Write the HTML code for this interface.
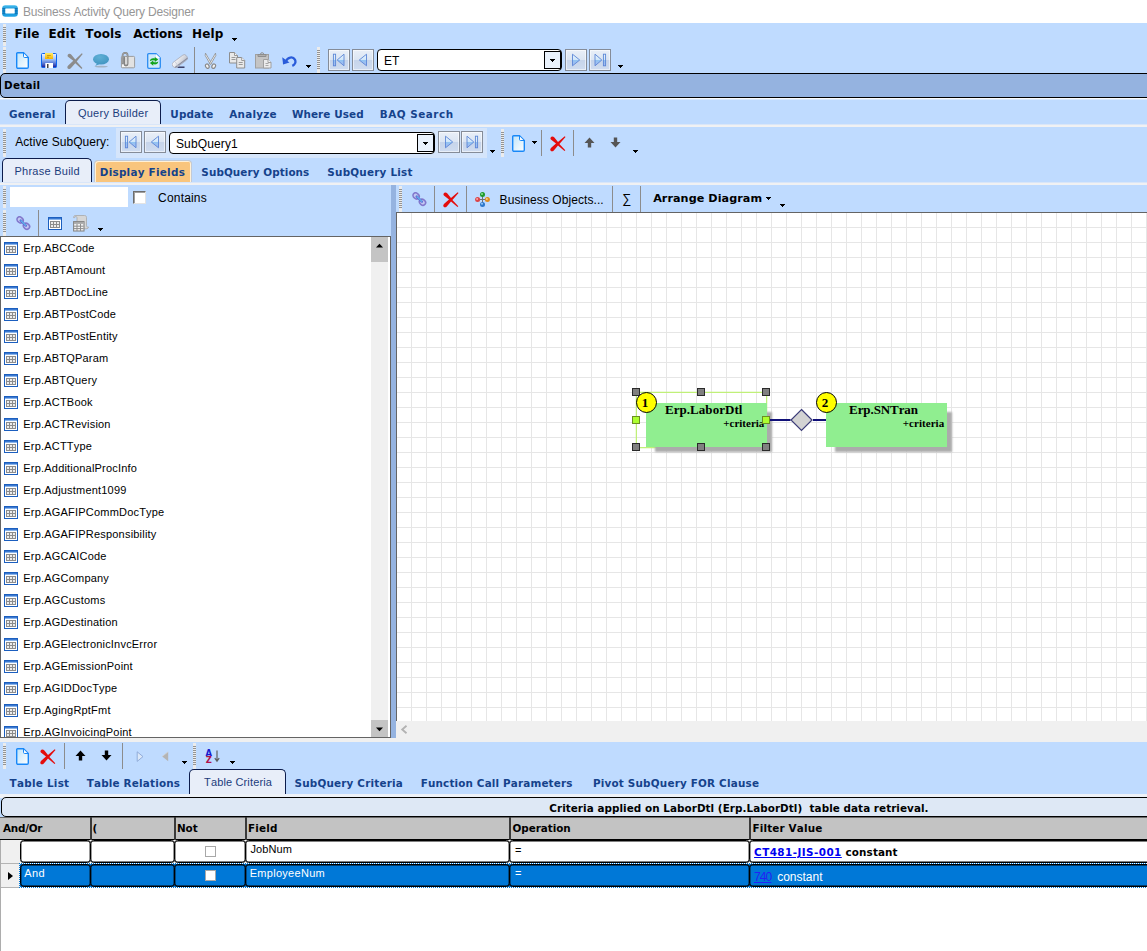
<!DOCTYPE html>
<html><head><meta charset="utf-8"><title>Business Activity Query Designer</title>
<style>
*{box-sizing:border-box;margin:0;padding:0}
html,body{width:1147px;height:951px;overflow:hidden;background:#BFDBFF;font-family:"Liberation Sans",sans-serif;font-size:12px;color:#000}
.a{position:absolute}
.t{position:absolute;white-space:pre;font-kerning:none}
.grip{position:absolute;width:3px;background:repeating-linear-gradient(to bottom,#939393 0,#939393 1px,transparent 1px,transparent 2px) 0 3px/100% calc(100% - 7px) no-repeat,#ECECEC}
.sep{position:absolute;width:1px;background:#8c8c8c}
.dd{position:absolute;width:5px;height:3px;background:#000;clip-path:polygon(0 0,100% 0,100% 33.400%,80% 33.400%,80% 66.700%,60% 66.700%,60% 100%,40% 100%,40% 66.700%,20% 66.700%,20% 33.400%,0 33.400%)}
.nb{position:absolute;width:22px;height:22px;border:1px solid #858c98;background:linear-gradient(#e9eff8 0,#dbe5f3 50%,#c6d4ea 50%,#cfdcf0 100%);box-shadow:inset 0 0 0 1px rgba(255,255,255,.55)}

</style></head>
<body>
<svg width="0" height="0" style="position:absolute"><defs>
<linearGradient id="gdoc" x1="0" y1="0" x2="1" y2="1"><stop offset="0" stop-color="#bfe4fa"/><stop offset="1" stop-color="#ffffff"/></linearGradient>
<linearGradient id="gsave" x1="0" y1="0" x2="0" y2="1"><stop offset="0" stop-color="#f2f2ff"/><stop offset=".4" stop-color="#a4c4f6"/><stop offset=".65" stop-color="#6486dc"/><stop offset="1" stop-color="#181896"/></linearGradient><linearGradient id="gyel" x1="0" y1="0" x2="0" y2="1"><stop offset="0" stop-color="#ffe964"/><stop offset="1" stop-color="#f6b400"/></linearGradient>
<linearGradient id="gnav" x1="0" y1="0" x2="0" y2="1"><stop offset="0" stop-color="#e8f3fc"/><stop offset=".5" stop-color="#cfe6fa"/><stop offset=".5" stop-color="#8fc4f2"/><stop offset="1" stop-color="#a9b8f0"/></linearGradient>
<linearGradient id="ger" x1="0" y1="0" x2="1" y2="1"><stop offset="0" stop-color="#ffffff"/><stop offset="1" stop-color="#b8bcc8"/></linearGradient>
<radialGradient id="gbub" cx=".4" cy=".3" r=".8"><stop offset="0" stop-color="#5fb0d6"/><stop offset="1" stop-color="#3f93c0"/></radialGradient>
</defs></svg>
<div class="a" style="left:0px;top:0px;width:1147px;height:23px;background:#fff"></div>
<svg class="a" style="left:2px;top:5px" width="16" height="12" viewBox="0 0 16 12" ><defs><linearGradient id="gti" x1="0" y1="0" x2="0" y2="1"><stop offset="0" stop-color="#45bdf0"/><stop offset=".45" stop-color="#128bd0"/><stop offset="1" stop-color="#22a6e6"/></linearGradient></defs><rect x=".2" y=".2" width="15.600" height="11.600" rx="3.200" fill="url(#gti)"/><rect x="3.200" y="3.400" width="9.600" height="5" rx=".6" fill="#fff"/><path d="M.4 3.500h2.800M.4 5.200h2.800M.4 6.900h2.800M.4 8.600h2.800M12.800 3.500h2.800M12.800 5.200h2.800M12.800 6.900h2.800M12.800 8.600h2.800" stroke="#0a64a6" stroke-width=".7"/></svg>
<div class="t " style="left:23.02px;top:5px;font-family:'Liberation Sans',sans-serif;font-weight:normal;font-size:12px;line-height:14px;letter-spacing:-0.184px;color:#969696;">Business Activity Query Designer</div>
<div class="grip" style="left:3px;top:24px;height:22px"></div>
<div class="t " style="left:14.50px;top:27px;font-family:'DejaVu Sans','Liberation Sans',sans-serif;font-weight:bold;font-size:12px;line-height:14px;letter-spacing:0.140px;">File</div>
<div class="t " style="left:48.60px;top:27px;font-family:'DejaVu Sans','Liberation Sans',sans-serif;font-weight:bold;font-size:12px;line-height:14px;letter-spacing:0.080px;">Edit</div>
<div class="t " style="left:85.34px;top:27px;font-family:'DejaVu Sans','Liberation Sans',sans-serif;font-weight:bold;font-size:12px;line-height:14px;letter-spacing:0.024px;">Tools</div>
<div class="t " style="left:133.34px;top:27px;font-family:'DejaVu Sans','Liberation Sans',sans-serif;font-weight:bold;font-size:12px;line-height:14px;letter-spacing:-0.125px;">Actions</div>
<div class="t " style="left:192.10px;top:27px;font-family:'DejaVu Sans','Liberation Sans',sans-serif;font-weight:bold;font-size:12px;line-height:14px;letter-spacing:0.085px;">Help</div>
<div class="dd" style="left:232px;top:38px"></div>
<div class="grip" style="left:3px;top:47px;height:26px"></div>
<svg class="a" style="left:16px;top:52px" width="13" height="17" viewBox="0 0 13 17" ><path d="M1.600 .7h5.900l4.800 4.800V15a1.300 1.300 0 0 1-1.300 1.300H2A1.300 1.300 0 0 1 .7 15V1.600a.9.900 0 0 1 .9-.9z" fill="url(#gdoc)" stroke="#1888f8" stroke-width="1.400"/><path d="M7.500 .7v3.700a1.100 1.100 0 0 0 1.100 1.100h3.700z" fill="#fff" stroke="#1888f8" stroke-width="1"/></svg><svg class="a" style="left:41px;top:53px" width="16" height="15" viewBox="0 0 16 15" ><rect x=".5" y=".5" width="15" height="14" rx=".9" fill="url(#gsave)" stroke="#0c66f0" stroke-width="1"/><rect x="4" y="0" width="8" height="6" fill="url(#gyel)"/><path d="M6 2.500h3.800M6 4.200h2" stroke="#b88600" stroke-width=".7"/><rect x="4.300" y="10" width="7.700" height="5" fill="#fff"/><rect x="6" y="11" width="1.500" height="4" fill="#444"/></svg><svg class="a" style="left:67px;top:52.5px" width="16" height="16" viewBox="0 0 16 16" ><path d="M.8 1.800C1.500 .3 3.300 .4 4.400 1.700L8.300 6.600 14.800 .3l.9.700-6 7.400 5.700 6.700-.8.800-6.300-5.700-4.300 4.900C2.900 16.300 1.300 16.300.6 15.200c-.5-.9-.2-1.900.6-2.700L6.300 7.800 1.300 4C.5 3.300.4 2.600.8 1.800z" fill="#8c8c8c"/></svg><svg class="a" style="left:93px;top:54px" width="17" height="14" viewBox="0 0 17 14" ><ellipse cx="8.200" cy="12.600" rx="6.800" ry=".8" fill="#a3b3c4"/><ellipse cx="8" cy="5.200" rx="8" ry="5.200" fill="url(#gbub)"/><path d="M4.200 9L2.200 12l5-2.300z" fill="#489cc6"/></svg><svg class="a" style="left:120px;top:52px" width="16" height="17" viewBox="0 0 16 17" ><rect x="1.400" y="4.400" width="13.200" height="11.400" rx="1" fill="#e2e2e2" stroke="#9c9c9c" stroke-width="1"/><rect x="2" y="5" width="5.500" height="10" fill="#f4f4f4"/><path d="M2.600 11.500V3.300a2.500 2.500 0 0 1 5 0V12a1.600 1.600 0 0 1-3.200 0V5.500" fill="none" stroke="#848484" stroke-width="1.700" stroke-linecap="round"/><path d="M2.600 11.500V3.300a2.500 2.500 0 0 1 5 0V12" fill="none" stroke="#b8b8b8" stroke-width=".5"/></svg><svg class="a" style="left:147px;top:53px" width="14" height="16" viewBox="0 0 14 16" ><path d="M1.700 .7h7.300l4.300 4.300V14a1.300 1.300 0 0 1-1.300 1.300H2A1.300 1.300 0 0 1 .7 14V1.700a1 1 0 0 1 1-1z" fill="#cfe9fa" stroke="#2a8cf2" stroke-width="1.300"/><path d="M9 .9v3.200a1 1 0 0 0 1 1h3.200z" fill="#fff"/><path d="M2.800 8.200C3 5.600 5.600 4.600 7.800 5.500V3.900l3.400 2.700-3.400 2.500V7.600C6 7 4.300 7.400 2.800 8.200z" fill="#12a41c"/><path d="M11.300 8.400c-.2 2.600-2.800 3.600-5 2.700v1.600L2.900 10l3.400-2.500v1.500c1.800.6 3.500.2 5-.6z" fill="#12a41c"/></svg><svg class="a" style="left:172px;top:54px" width="16" height="14" viewBox="0 0 16 14" ><path d="M5.500 13.200h7" stroke="#26264e" stroke-width="1.300"/><g transform="rotate(-37 8 7)"><rect x="-.8" y="4" width="17" height="6.200" rx="2.400" fill="url(#ger)" stroke="#a4a8b6" stroke-width=".7"/><path d="M.2 9.200h15.500" stroke="#8a8ea0" stroke-width="1.100"/><path d="M3.600 4.200v5.800" stroke="#c8ccd6" stroke-width=".8"/></g></svg>
<div class="sep" style="left:194px;top:47px;height:26px"></div>
<svg class="a" style="left:204px;top:52.5px" width="13" height="16" viewBox="0 0 13 16" ><path d="M1.500 .2L7.600 10.600 6.200 11.200 1.200 2.500z" fill="#f6f6f6" stroke="#8a8a8a" stroke-width=".8"/><path d="M11.500 .2L5.400 10.600 6.800 11.200 11.800 2.500z" fill="#f6f6f6" stroke="#8a8a8a" stroke-width=".8"/><ellipse cx="3.300" cy="13.200" rx="1.700" ry="2.300" fill="#f2f2f2" stroke="#8a8a8a" stroke-width="1.200" transform="rotate(-28 3.300 13.200)"/><ellipse cx="9.700" cy="13.200" rx="1.700" ry="2.300" fill="#f2f2f2" stroke="#8a8a8a" stroke-width="1.200" transform="rotate(28 9.700 13.200)"/></svg><svg class="a" style="left:229px;top:52px" width="17" height="17" viewBox="0 0 17 17" ><path d="M.5 .5h5l3 3v7.500h-8z" fill="#e9e9e9" stroke="#8e8e8e"/><path d="M5.500 .5v3h3" fill="#f8f8f8" stroke="#8e8e8e" stroke-width=".9"/><path d="M2.500 5.500h4M2.500 7.500h4" stroke="#9a9a9a"/><g transform="translate(7.200 5)"><path d="M.5 .5h5l3 3v7.500h-8z" fill="#e9e9e9" stroke="#8e8e8e"/><path d="M5.500 .5v3h3" fill="#f8f8f8" stroke="#8e8e8e" stroke-width=".9"/><path d="M2.500 5.500h4M2.500 7.500h4" stroke="#9a9a9a"/></g></svg><svg class="a" style="left:255px;top:52px" width="17" height="17" viewBox="0 0 17 17" ><rect x=".5" y="2.500" width="13" height="13.500" fill="#c4c4c4" stroke="#a0a0a0"/><path d="M3 2.500h8v2H3z" fill="#b0b0b0" stroke="#8e8e8e"/><path d="M5.500 2.300a1.600 1.600 0 0 1 3.200 0" fill="none" stroke="#8e8e8e"/><path d="M8.500 7.500h4.500l3 3v5.500h-7.500z" fill="#ececec" stroke="#a0a0a0"/><path d="M13 7.500v3h3" fill="#f6f6f6" stroke="#a0a0a0"/><path d="M10.500 11.500h3M10.500 13.500h3" stroke="#a8a8a8"/></svg><svg class="a" style="left:282px;top:55px" width="15" height="12" viewBox="0 0 15 12" ><path d="M4 6.200C5.500 2 11 1.200 12.900 4.600c1.300 2.400.2 5-2.600 6.300" fill="none" stroke="#2a5cda" stroke-width="2.300"/><path d="M.2 2.200l.9 7.300 6.400-2z" fill="#2a5cda"/></svg>
<div class="dd" style="left:306px;top:65px"></div>
<div class="grip" style="left:317px;top:47px;height:26px"></div>
<div class="nb" style="left:328px;top:49px"><svg class="a" style="left:-1px;top:-1px" width="22" height="22" viewBox="0 0 22 22"><rect x="5.400" y="5.200" width="2.200" height="11.600" fill="url(#gnav)" stroke="#5b86d6" stroke-width=".9"/><path d="M9.200 11L16 5.200v11.600z" fill="url(#gnav)" stroke="#5b86d6" stroke-width=".9"/></svg></div><div class="nb" style="left:352px;top:49px"><svg class="a" style="left:-1px;top:-1px" width="22" height="22" viewBox="0 0 22 22"><path d="M7.300 11L14.500 5.200v11.600z" fill="url(#gnav)" stroke="#5b86d6" stroke-width=".9"/></svg></div>
<div class="a" style="left:377px;top:49px;width:185px;height:22px;background:#fff;border:1px solid #000;border-radius:4px"></div><div class="a" style="left:544px;top:51px;width:17px;height:18px;background:#EAF2FC;border:1px solid #000"></div><div class="dd" style="left:550px;top:59px"></div>
<div class="t " style="left:384.02px;top:54px;font-family:'Liberation Sans',sans-serif;font-weight:normal;font-size:12px;line-height:14px;">ET</div>
<div class="nb" style="left:565px;top:49px"><svg class="a" style="left:-1px;top:-1px" width="22" height="22" viewBox="0 0 22 22"><path d="M14.700 11L7.500 5.200v11.600z" fill="url(#gnav)" stroke="#5b86d6" stroke-width=".9"/></svg></div><div class="nb" style="left:589px;top:49px"><svg class="a" style="left:-1px;top:-1px" width="22" height="22" viewBox="0 0 22 22"><rect x="14.400" y="5.200" width="2.200" height="11.600" fill="url(#gnav)" stroke="#5b86d6" stroke-width=".9"/><path d="M12.800 11L6 5.200v11.600z" fill="url(#gnav)" stroke="#5b86d6" stroke-width=".9"/></svg></div>
<div class="dd" style="left:618px;top:65px"></div>
<div class="a" style="left:0px;top:73px;width:1152px;height:25px;background:#95B3E0;border:1px solid #000;border-radius:5px"></div>
<div class="t " style="left:4.05px;top:79px;font-family:'DejaVu Sans','Liberation Sans',sans-serif;font-weight:bold;font-size:10.4px;line-height:12px;letter-spacing:0.245px;">Detail</div>
<div class="a" style="left:0px;top:98px;width:1147px;height:1px;background:#fbfbfb"></div>
<div class="a" style="left:0px;top:99px;width:1147px;height:1px;background:#d8e8fd"></div>
<div class="a" style="left:65px;top:100px;width:96px;height:24px;background:#E8EEF9;border:1px solid #0c1c4c;border-bottom:none;border-radius:5px 5px 0 0"></div>
<div class="t " style="left:9.08px;top:108px;font-family:'DejaVu Sans','Liberation Sans',sans-serif;font-weight:bold;font-size:10.4px;line-height:12px;letter-spacing:0.072px;color:#15428B;">General</div>
<div class="t " style="left:170.35px;top:108px;font-family:'DejaVu Sans','Liberation Sans',sans-serif;font-weight:bold;font-size:10.4px;line-height:12px;letter-spacing:0.116px;color:#15428B;">Update</div>
<div class="t " style="left:229.35px;top:108px;font-family:'DejaVu Sans','Liberation Sans',sans-serif;font-weight:bold;font-size:10.4px;line-height:12px;letter-spacing:0.205px;color:#15428B;">Analyze</div>
<div class="t " style="left:291.89px;top:108px;font-family:'DejaVu Sans','Liberation Sans',sans-serif;font-weight:bold;font-size:10.4px;line-height:12px;letter-spacing:0.102px;color:#15428B;">Where Used</div>
<div class="t " style="left:379.85px;top:108px;font-family:'DejaVu Sans','Liberation Sans',sans-serif;font-weight:bold;font-size:10.4px;line-height:12px;letter-spacing:0.508px;color:#15428B;">BAQ Search</div>
<div class="t " style="left:77.98px;top:107px;font-family:'Liberation Sans',sans-serif;font-weight:normal;font-size:11px;line-height:12px;letter-spacing:0.238px;color:#1c3c7c;">Query Builder</div>
<div class="a" style="left:0px;top:124px;width:1147px;height:1px;background:#D9E6F9"></div>
<div class="a" style="left:0px;top:125px;width:1147px;height:2px;background:#F0F1F3"></div>
<div class="grip" style="left:3px;top:129px;height:28px"></div>
<div class="t " style="left:15.28px;top:135px;font-family:'Liberation Sans',sans-serif;font-weight:normal;font-size:12px;line-height:14px;letter-spacing:0.050px;">Active SubQuery:</div>
<div class="a" style="left:116px;top:128px;width:371px;height:30px;background:#D5E5FB"></div>
<div class="nb" style="left:120px;top:131px"><svg class="a" style="left:-1px;top:-1px" width="22" height="22" viewBox="0 0 22 22"><rect x="5.400" y="5.200" width="2.200" height="11.600" fill="url(#gnav)" stroke="#5b86d6" stroke-width=".9"/><path d="M9.200 11L16 5.200v11.600z" fill="url(#gnav)" stroke="#5b86d6" stroke-width=".9"/></svg></div><div class="nb" style="left:144px;top:131px"><svg class="a" style="left:-1px;top:-1px" width="22" height="22" viewBox="0 0 22 22"><path d="M7.300 11L14.500 5.200v11.600z" fill="url(#gnav)" stroke="#5b86d6" stroke-width=".9"/></svg></div>
<div class="a" style="left:169px;top:132px;width:266px;height:22px;background:#fff;border:1px solid #000;border-radius:4px"></div><div class="a" style="left:417px;top:134px;width:17px;height:18px;background:#EAF2FC;border:1px solid #000"></div><div class="dd" style="left:423px;top:142px"></div>
<div class="t " style="left:175.96px;top:137px;font-family:'Liberation Sans',sans-serif;font-weight:normal;font-size:12px;line-height:14px;letter-spacing:0.128px;">SubQuery1</div>
<div class="nb" style="left:438px;top:131px"><svg class="a" style="left:-1px;top:-1px" width="22" height="22" viewBox="0 0 22 22"><path d="M14.700 11L7.500 5.200v11.600z" fill="url(#gnav)" stroke="#5b86d6" stroke-width=".9"/></svg></div><div class="nb" style="left:461px;top:131px"><svg class="a" style="left:-1px;top:-1px" width="22" height="22" viewBox="0 0 22 22"><rect x="14.400" y="5.200" width="2.200" height="11.600" fill="url(#gnav)" stroke="#5b86d6" stroke-width=".9"/><path d="M12.800 11L6 5.200v11.600z" fill="url(#gnav)" stroke="#5b86d6" stroke-width=".9"/></svg></div>
<div class="dd" style="left:490px;top:150px"></div>
<div class="grip" style="left:501px;top:129px;height:28px"></div>
<svg class="a" style="left:512px;top:135px" width="13" height="17" viewBox="0 0 13 17" ><path d="M1.600 .7h5.900l4.800 4.800V15a1.300 1.300 0 0 1-1.300 1.300H2A1.300 1.300 0 0 1 .7 15V1.600a.9.900 0 0 1 .9-.9z" fill="url(#gdoc)" stroke="#1888f8" stroke-width="1.400"/><path d="M7.500 .7v3.700a1.100 1.100 0 0 0 1.100 1.100h3.700z" fill="#fff" stroke="#1888f8" stroke-width="1"/></svg><div class="dd" style="left:532px;top:141px"></div><div class="sep" style="left:541px;top:130px;height:26px"></div><svg class="a" style="left:550px;top:136px" width="16" height="16" viewBox="0 0 16 16" ><path d="M.7 1.500C1.500 .1 3.300 .3 4.400 1.600L8 6 14.700 .2l.8.700-6.100 7 5.900 6.300-.8.800-6.500-5.400-4.200 4.800C2.800 15.700 1.100 15.600.5 14.500c-.5-.9-.1-1.900.7-2.700L6 7.500 1.200 3.800C.4 3.100.3 2.300.7 1.500z" fill="#e40c0c"/></svg><div class="sep" style="left:573px;top:130px;height:26px"></div><svg class="a" style="left:584px;top:137px" width="11" height="11" viewBox="0 0 11 11" ><path d="M5.500 .5l5 5.500H7.200V10.500H3.800V6H.5z" fill="#555"/></svg><svg class="a" style="left:610px;top:137px" width="11" height="11" viewBox="0 0 11 11" ><path d="M5.500 10.500l5-5.500H7.200V.5H3.800V5H.5z" fill="#555"/></svg><div class="dd" style="left:633px;top:150px"></div>
<div class="a" style="left:2px;top:158px;width:90px;height:24px;background:#E8EEF9;border:1px solid #0c1c4c;border-bottom:none;border-radius:5px 5px 0 0"></div>
<div class="t " style="left:14.40px;top:165px;font-family:'Liberation Sans',sans-serif;font-weight:normal;font-size:11px;line-height:12px;letter-spacing:0.267px;color:#1c3c7c;">Phrase Build</div>
<div class="a" style="left:94px;top:160px;width:98px;height:22px;background:#F9C57D;border:1px solid #c2cad6;border-bottom:none;border-radius:4px 4px 0 0;box-shadow:inset 1px 1px 0 #fff1d8,inset -1px 0 0 #fff1d8"></div>
<div class="t " style="left:99.75px;top:166px;font-family:'DejaVu Sans','Liberation Sans',sans-serif;font-weight:bold;font-size:10.4px;line-height:12px;letter-spacing:0.262px;color:#15428B;">Display Fields</div>
<div class="t " style="left:201.35px;top:166px;font-family:'DejaVu Sans','Liberation Sans',sans-serif;font-weight:bold;font-size:10.4px;line-height:12px;letter-spacing:0.087px;color:#15428B;">SubQuery Options</div>
<div class="t " style="left:327.35px;top:166px;font-family:'DejaVu Sans','Liberation Sans',sans-serif;font-weight:bold;font-size:10.4px;line-height:12px;letter-spacing:0.214px;color:#15428B;">SubQuery List</div>
<div class="a" style="left:0px;top:182px;width:1147px;height:1px;background:#D9E6F9"></div>
<div class="a" style="left:0px;top:183px;width:1147px;height:2px;background:#F0F1F3"></div>
<div class="grip" style="left:3px;top:186px;height:22px"></div>
<div class="a" style="left:10px;top:187px;width:118px;height:20px;background:#fff"></div>
<div class="a" style="left:133px;top:191px;width:13px;height:13px;background:#fff;border:1px solid;border-color:#6d6d6d #e3e3e3 #e3e3e3 #6d6d6d;box-shadow:inset 1px 1px 0 #a0a0a0"></div>
<div class="t " style="left:158.09px;top:191px;font-family:'Liberation Sans',sans-serif;font-weight:normal;font-size:12px;line-height:14px;letter-spacing:0.183px;">Contains</div>
<div class="grip" style="left:3px;top:210px;height:26px"></div>
<svg class="a" style="left:16px;top:216px" width="15" height="15" viewBox="0 0 15 15" ><g fill="none"><ellipse cx="4.100" cy="3.900" rx="3.300" ry="2.700" transform="rotate(40 4.100 3.900)" fill="#c4c0ec" fill-opacity=".7" stroke="#8278cc" stroke-width="1.600"/><ellipse cx="10.500" cy="10.200" rx="3.300" ry="2.700" transform="rotate(40 10.500 10.200)" fill="#c4c0ec" fill-opacity=".7" stroke="#8278cc" stroke-width="1.600"/><path d="M4.600 4.400l5.400 5.300" stroke="#5a6cd8" stroke-width="2.200" stroke-linecap="round"/><path d="M5 4.600l4.800 4.700" stroke="#62e0f4" stroke-width="1" stroke-linecap="round"/></g></svg><div class="sep" style="left:38px;top:210px;height:26px"></div>
<svg class="a" style="left:48px;top:217px" width="14" height="13" viewBox="0 0 14 13" ><rect x=".5" y=".5" width="13" height="12" fill="#fff" stroke="#1c5fbf"/><rect x="1" y="1" width="12" height="1" fill="#3a78d0"/><rect x="1" y="2" width="12" height="1" fill="#8ab4ea"/><rect x="2.500" y="4.500" width="9" height="6" fill="#ececec" stroke="#8c8c8c"/><path d="M5.500 4.500v6M8.500 4.500v6M2.500 7.500h9" stroke="#8c8c8c" fill="none"/></svg>
<svg class="a" style="left:73px;top:215px" width="17" height="17" viewBox="0 0 17 17" ><path d="M2.200 .5h9.300c1.400 0 2 .8 2 2v8.300c0 1 .8 1.400 2 1.200 0 1.300-1 1.800-2.500 1.800H4V3c0-1-.4-1.500-1.200-1.500s-1.200.5-1.200 1.200H.6C.5 1.500 1.100.5 2.200.5z" fill="#d6d6d6" stroke="#a8a8a8" stroke-width=".8"/><rect x=".6" y="6.600" width="10.400" height="9.400" fill="#f2f2f2" stroke="#868686" stroke-width="1.100"/><rect x="1" y="7" width="9.600" height="1.900" fill="#a8a8a8"/><path d="M4 9v7M7.500 9v7M1 11.200h9.600M1 13.600h9.600" stroke="#8e8e8e" stroke-width="1"/></svg><div class="dd" style="left:98px;top:228px"></div>
<div class="a" style="left:0px;top:236px;width:391px;height:502px;background:#fff;border:1px solid #646464"></div>
<svg class="a" style="left:4px;top:242px" width="14" height="13" viewBox="0 0 14 13" ><rect x=".5" y=".5" width="13" height="12" fill="#fff" stroke="#1c5fbf"/><rect x="1" y="1" width="12" height="1" fill="#3a78d0"/><rect x="1" y="2" width="12" height="1" fill="#8ab4ea"/><rect x="2.500" y="4.500" width="9" height="6" fill="#ececec" stroke="#8c8c8c"/><path d="M5.500 4.500v6M8.500 4.500v6M2.500 7.500h9" stroke="#8c8c8c" fill="none"/></svg>
<div class="t " style="left:23.30px;top:242px;font-family:'Liberation Sans',sans-serif;font-weight:normal;font-size:11px;line-height:12px;letter-spacing:0.200px;">Erp.ABCCode</div>
<svg class="a" style="left:4px;top:264px" width="14" height="13" viewBox="0 0 14 13" ><rect x=".5" y=".5" width="13" height="12" fill="#fff" stroke="#1c5fbf"/><rect x="1" y="1" width="12" height="1" fill="#3a78d0"/><rect x="1" y="2" width="12" height="1" fill="#8ab4ea"/><rect x="2.500" y="4.500" width="9" height="6" fill="#ececec" stroke="#8c8c8c"/><path d="M5.500 4.500v6M8.500 4.500v6M2.500 7.500h9" stroke="#8c8c8c" fill="none"/></svg>
<div class="t " style="left:23.30px;top:264px;font-family:'Liberation Sans',sans-serif;font-weight:normal;font-size:11px;line-height:12px;letter-spacing:0.200px;">Erp.ABTAmount</div>
<svg class="a" style="left:4px;top:286px" width="14" height="13" viewBox="0 0 14 13" ><rect x=".5" y=".5" width="13" height="12" fill="#fff" stroke="#1c5fbf"/><rect x="1" y="1" width="12" height="1" fill="#3a78d0"/><rect x="1" y="2" width="12" height="1" fill="#8ab4ea"/><rect x="2.500" y="4.500" width="9" height="6" fill="#ececec" stroke="#8c8c8c"/><path d="M5.500 4.500v6M8.500 4.500v6M2.500 7.500h9" stroke="#8c8c8c" fill="none"/></svg>
<div class="t " style="left:23.30px;top:286px;font-family:'Liberation Sans',sans-serif;font-weight:normal;font-size:11px;line-height:12px;letter-spacing:0.200px;">Erp.ABTDocLine</div>
<svg class="a" style="left:4px;top:308px" width="14" height="13" viewBox="0 0 14 13" ><rect x=".5" y=".5" width="13" height="12" fill="#fff" stroke="#1c5fbf"/><rect x="1" y="1" width="12" height="1" fill="#3a78d0"/><rect x="1" y="2" width="12" height="1" fill="#8ab4ea"/><rect x="2.500" y="4.500" width="9" height="6" fill="#ececec" stroke="#8c8c8c"/><path d="M5.500 4.500v6M8.500 4.500v6M2.500 7.500h9" stroke="#8c8c8c" fill="none"/></svg>
<div class="t " style="left:23.30px;top:308px;font-family:'Liberation Sans',sans-serif;font-weight:normal;font-size:11px;line-height:12px;letter-spacing:0.200px;">Erp.ABTPostCode</div>
<svg class="a" style="left:4px;top:330px" width="14" height="13" viewBox="0 0 14 13" ><rect x=".5" y=".5" width="13" height="12" fill="#fff" stroke="#1c5fbf"/><rect x="1" y="1" width="12" height="1" fill="#3a78d0"/><rect x="1" y="2" width="12" height="1" fill="#8ab4ea"/><rect x="2.500" y="4.500" width="9" height="6" fill="#ececec" stroke="#8c8c8c"/><path d="M5.500 4.500v6M8.500 4.500v6M2.500 7.500h9" stroke="#8c8c8c" fill="none"/></svg>
<div class="t " style="left:23.30px;top:330px;font-family:'Liberation Sans',sans-serif;font-weight:normal;font-size:11px;line-height:12px;letter-spacing:0.200px;">Erp.ABTPostEntity</div>
<svg class="a" style="left:4px;top:352px" width="14" height="13" viewBox="0 0 14 13" ><rect x=".5" y=".5" width="13" height="12" fill="#fff" stroke="#1c5fbf"/><rect x="1" y="1" width="12" height="1" fill="#3a78d0"/><rect x="1" y="2" width="12" height="1" fill="#8ab4ea"/><rect x="2.500" y="4.500" width="9" height="6" fill="#ececec" stroke="#8c8c8c"/><path d="M5.500 4.500v6M8.500 4.500v6M2.500 7.500h9" stroke="#8c8c8c" fill="none"/></svg>
<div class="t " style="left:23.30px;top:352px;font-family:'Liberation Sans',sans-serif;font-weight:normal;font-size:11px;line-height:12px;letter-spacing:0.200px;">Erp.ABTQParam</div>
<svg class="a" style="left:4px;top:374px" width="14" height="13" viewBox="0 0 14 13" ><rect x=".5" y=".5" width="13" height="12" fill="#fff" stroke="#1c5fbf"/><rect x="1" y="1" width="12" height="1" fill="#3a78d0"/><rect x="1" y="2" width="12" height="1" fill="#8ab4ea"/><rect x="2.500" y="4.500" width="9" height="6" fill="#ececec" stroke="#8c8c8c"/><path d="M5.500 4.500v6M8.500 4.500v6M2.500 7.500h9" stroke="#8c8c8c" fill="none"/></svg>
<div class="t " style="left:23.30px;top:374px;font-family:'Liberation Sans',sans-serif;font-weight:normal;font-size:11px;line-height:12px;letter-spacing:0.200px;">Erp.ABTQuery</div>
<svg class="a" style="left:4px;top:396px" width="14" height="13" viewBox="0 0 14 13" ><rect x=".5" y=".5" width="13" height="12" fill="#fff" stroke="#1c5fbf"/><rect x="1" y="1" width="12" height="1" fill="#3a78d0"/><rect x="1" y="2" width="12" height="1" fill="#8ab4ea"/><rect x="2.500" y="4.500" width="9" height="6" fill="#ececec" stroke="#8c8c8c"/><path d="M5.500 4.500v6M8.500 4.500v6M2.500 7.500h9" stroke="#8c8c8c" fill="none"/></svg>
<div class="t " style="left:23.30px;top:396px;font-family:'Liberation Sans',sans-serif;font-weight:normal;font-size:11px;line-height:12px;letter-spacing:0.200px;">Erp.ACTBook</div>
<svg class="a" style="left:4px;top:418px" width="14" height="13" viewBox="0 0 14 13" ><rect x=".5" y=".5" width="13" height="12" fill="#fff" stroke="#1c5fbf"/><rect x="1" y="1" width="12" height="1" fill="#3a78d0"/><rect x="1" y="2" width="12" height="1" fill="#8ab4ea"/><rect x="2.500" y="4.500" width="9" height="6" fill="#ececec" stroke="#8c8c8c"/><path d="M5.500 4.500v6M8.500 4.500v6M2.500 7.500h9" stroke="#8c8c8c" fill="none"/></svg>
<div class="t " style="left:23.30px;top:418px;font-family:'Liberation Sans',sans-serif;font-weight:normal;font-size:11px;line-height:12px;letter-spacing:0.200px;">Erp.ACTRevision</div>
<svg class="a" style="left:4px;top:440px" width="14" height="13" viewBox="0 0 14 13" ><rect x=".5" y=".5" width="13" height="12" fill="#fff" stroke="#1c5fbf"/><rect x="1" y="1" width="12" height="1" fill="#3a78d0"/><rect x="1" y="2" width="12" height="1" fill="#8ab4ea"/><rect x="2.500" y="4.500" width="9" height="6" fill="#ececec" stroke="#8c8c8c"/><path d="M5.500 4.500v6M8.500 4.500v6M2.500 7.500h9" stroke="#8c8c8c" fill="none"/></svg>
<div class="t " style="left:23.30px;top:440px;font-family:'Liberation Sans',sans-serif;font-weight:normal;font-size:11px;line-height:12px;letter-spacing:0.200px;">Erp.ACTType</div>
<svg class="a" style="left:4px;top:462px" width="14" height="13" viewBox="0 0 14 13" ><rect x=".5" y=".5" width="13" height="12" fill="#fff" stroke="#1c5fbf"/><rect x="1" y="1" width="12" height="1" fill="#3a78d0"/><rect x="1" y="2" width="12" height="1" fill="#8ab4ea"/><rect x="2.500" y="4.500" width="9" height="6" fill="#ececec" stroke="#8c8c8c"/><path d="M5.500 4.500v6M8.500 4.500v6M2.500 7.500h9" stroke="#8c8c8c" fill="none"/></svg>
<div class="t " style="left:23.30px;top:462px;font-family:'Liberation Sans',sans-serif;font-weight:normal;font-size:11px;line-height:12px;letter-spacing:0.200px;">Erp.AdditionalProcInfo</div>
<svg class="a" style="left:4px;top:484px" width="14" height="13" viewBox="0 0 14 13" ><rect x=".5" y=".5" width="13" height="12" fill="#fff" stroke="#1c5fbf"/><rect x="1" y="1" width="12" height="1" fill="#3a78d0"/><rect x="1" y="2" width="12" height="1" fill="#8ab4ea"/><rect x="2.500" y="4.500" width="9" height="6" fill="#ececec" stroke="#8c8c8c"/><path d="M5.500 4.500v6M8.500 4.500v6M2.500 7.500h9" stroke="#8c8c8c" fill="none"/></svg>
<div class="t " style="left:23.30px;top:484px;font-family:'Liberation Sans',sans-serif;font-weight:normal;font-size:11px;line-height:12px;letter-spacing:0.200px;">Erp.Adjustment1099</div>
<svg class="a" style="left:4px;top:506px" width="14" height="13" viewBox="0 0 14 13" ><rect x=".5" y=".5" width="13" height="12" fill="#fff" stroke="#1c5fbf"/><rect x="1" y="1" width="12" height="1" fill="#3a78d0"/><rect x="1" y="2" width="12" height="1" fill="#8ab4ea"/><rect x="2.500" y="4.500" width="9" height="6" fill="#ececec" stroke="#8c8c8c"/><path d="M5.500 4.500v6M8.500 4.500v6M2.500 7.500h9" stroke="#8c8c8c" fill="none"/></svg>
<div class="t " style="left:23.30px;top:506px;font-family:'Liberation Sans',sans-serif;font-weight:normal;font-size:11px;line-height:12px;letter-spacing:0.200px;">Erp.AGAFIPCommDocType</div>
<svg class="a" style="left:4px;top:528px" width="14" height="13" viewBox="0 0 14 13" ><rect x=".5" y=".5" width="13" height="12" fill="#fff" stroke="#1c5fbf"/><rect x="1" y="1" width="12" height="1" fill="#3a78d0"/><rect x="1" y="2" width="12" height="1" fill="#8ab4ea"/><rect x="2.500" y="4.500" width="9" height="6" fill="#ececec" stroke="#8c8c8c"/><path d="M5.500 4.500v6M8.500 4.500v6M2.500 7.500h9" stroke="#8c8c8c" fill="none"/></svg>
<div class="t " style="left:23.30px;top:528px;font-family:'Liberation Sans',sans-serif;font-weight:normal;font-size:11px;line-height:12px;letter-spacing:0.200px;">Erp.AGAFIPResponsibility</div>
<svg class="a" style="left:4px;top:550px" width="14" height="13" viewBox="0 0 14 13" ><rect x=".5" y=".5" width="13" height="12" fill="#fff" stroke="#1c5fbf"/><rect x="1" y="1" width="12" height="1" fill="#3a78d0"/><rect x="1" y="2" width="12" height="1" fill="#8ab4ea"/><rect x="2.500" y="4.500" width="9" height="6" fill="#ececec" stroke="#8c8c8c"/><path d="M5.500 4.500v6M8.500 4.500v6M2.500 7.500h9" stroke="#8c8c8c" fill="none"/></svg>
<div class="t " style="left:23.30px;top:550px;font-family:'Liberation Sans',sans-serif;font-weight:normal;font-size:11px;line-height:12px;letter-spacing:0.200px;">Erp.AGCAICode</div>
<svg class="a" style="left:4px;top:572px" width="14" height="13" viewBox="0 0 14 13" ><rect x=".5" y=".5" width="13" height="12" fill="#fff" stroke="#1c5fbf"/><rect x="1" y="1" width="12" height="1" fill="#3a78d0"/><rect x="1" y="2" width="12" height="1" fill="#8ab4ea"/><rect x="2.500" y="4.500" width="9" height="6" fill="#ececec" stroke="#8c8c8c"/><path d="M5.500 4.500v6M8.500 4.500v6M2.500 7.500h9" stroke="#8c8c8c" fill="none"/></svg>
<div class="t " style="left:23.30px;top:572px;font-family:'Liberation Sans',sans-serif;font-weight:normal;font-size:11px;line-height:12px;letter-spacing:0.200px;">Erp.AGCompany</div>
<svg class="a" style="left:4px;top:594px" width="14" height="13" viewBox="0 0 14 13" ><rect x=".5" y=".5" width="13" height="12" fill="#fff" stroke="#1c5fbf"/><rect x="1" y="1" width="12" height="1" fill="#3a78d0"/><rect x="1" y="2" width="12" height="1" fill="#8ab4ea"/><rect x="2.500" y="4.500" width="9" height="6" fill="#ececec" stroke="#8c8c8c"/><path d="M5.500 4.500v6M8.500 4.500v6M2.500 7.500h9" stroke="#8c8c8c" fill="none"/></svg>
<div class="t " style="left:23.30px;top:594px;font-family:'Liberation Sans',sans-serif;font-weight:normal;font-size:11px;line-height:12px;letter-spacing:0.200px;">Erp.AGCustoms</div>
<svg class="a" style="left:4px;top:616px" width="14" height="13" viewBox="0 0 14 13" ><rect x=".5" y=".5" width="13" height="12" fill="#fff" stroke="#1c5fbf"/><rect x="1" y="1" width="12" height="1" fill="#3a78d0"/><rect x="1" y="2" width="12" height="1" fill="#8ab4ea"/><rect x="2.500" y="4.500" width="9" height="6" fill="#ececec" stroke="#8c8c8c"/><path d="M5.500 4.500v6M8.500 4.500v6M2.500 7.500h9" stroke="#8c8c8c" fill="none"/></svg>
<div class="t " style="left:23.30px;top:616px;font-family:'Liberation Sans',sans-serif;font-weight:normal;font-size:11px;line-height:12px;letter-spacing:0.200px;">Erp.AGDestination</div>
<svg class="a" style="left:4px;top:638px" width="14" height="13" viewBox="0 0 14 13" ><rect x=".5" y=".5" width="13" height="12" fill="#fff" stroke="#1c5fbf"/><rect x="1" y="1" width="12" height="1" fill="#3a78d0"/><rect x="1" y="2" width="12" height="1" fill="#8ab4ea"/><rect x="2.500" y="4.500" width="9" height="6" fill="#ececec" stroke="#8c8c8c"/><path d="M5.500 4.500v6M8.500 4.500v6M2.500 7.500h9" stroke="#8c8c8c" fill="none"/></svg>
<div class="t " style="left:23.30px;top:638px;font-family:'Liberation Sans',sans-serif;font-weight:normal;font-size:11px;line-height:12px;letter-spacing:0.200px;">Erp.AGElectronicInvcError</div>
<svg class="a" style="left:4px;top:660px" width="14" height="13" viewBox="0 0 14 13" ><rect x=".5" y=".5" width="13" height="12" fill="#fff" stroke="#1c5fbf"/><rect x="1" y="1" width="12" height="1" fill="#3a78d0"/><rect x="1" y="2" width="12" height="1" fill="#8ab4ea"/><rect x="2.500" y="4.500" width="9" height="6" fill="#ececec" stroke="#8c8c8c"/><path d="M5.500 4.500v6M8.500 4.500v6M2.500 7.500h9" stroke="#8c8c8c" fill="none"/></svg>
<div class="t " style="left:23.30px;top:660px;font-family:'Liberation Sans',sans-serif;font-weight:normal;font-size:11px;line-height:12px;letter-spacing:0.200px;">Erp.AGEmissionPoint</div>
<svg class="a" style="left:4px;top:682px" width="14" height="13" viewBox="0 0 14 13" ><rect x=".5" y=".5" width="13" height="12" fill="#fff" stroke="#1c5fbf"/><rect x="1" y="1" width="12" height="1" fill="#3a78d0"/><rect x="1" y="2" width="12" height="1" fill="#8ab4ea"/><rect x="2.500" y="4.500" width="9" height="6" fill="#ececec" stroke="#8c8c8c"/><path d="M5.500 4.500v6M8.500 4.500v6M2.500 7.500h9" stroke="#8c8c8c" fill="none"/></svg>
<div class="t " style="left:23.30px;top:682px;font-family:'Liberation Sans',sans-serif;font-weight:normal;font-size:11px;line-height:12px;letter-spacing:0.200px;">Erp.AGIDDocType</div>
<svg class="a" style="left:4px;top:704px" width="14" height="13" viewBox="0 0 14 13" ><rect x=".5" y=".5" width="13" height="12" fill="#fff" stroke="#1c5fbf"/><rect x="1" y="1" width="12" height="1" fill="#3a78d0"/><rect x="1" y="2" width="12" height="1" fill="#8ab4ea"/><rect x="2.500" y="4.500" width="9" height="6" fill="#ececec" stroke="#8c8c8c"/><path d="M5.500 4.500v6M8.500 4.500v6M2.500 7.500h9" stroke="#8c8c8c" fill="none"/></svg>
<div class="t " style="left:23.30px;top:704px;font-family:'Liberation Sans',sans-serif;font-weight:normal;font-size:11px;line-height:12px;letter-spacing:0.200px;">Erp.AgingRptFmt</div>
<div class="a" style="left:4px;top:726px;width:14px;height:11px;overflow:hidden"><svg class="a" style="left:0px;top:0px" width="14" height="13" viewBox="0 0 14 13" ><rect x=".5" y=".5" width="13" height="12" fill="#fff" stroke="#1c5fbf"/><rect x="1" y="1" width="12" height="1" fill="#3a78d0"/><rect x="1" y="2" width="12" height="1" fill="#8ab4ea"/><rect x="2.500" y="4.500" width="9" height="6" fill="#ececec" stroke="#8c8c8c"/><path d="M5.500 4.500v6M8.500 4.500v6M2.500 7.500h9" stroke="#8c8c8c" fill="none"/></svg></div>
<div class="a" style="left:20px;top:724px;width:340px;height:13px;overflow:hidden"><div class="t " style="left:3.30px;top:2px;font-family:'Liberation Sans',sans-serif;font-weight:normal;font-size:11px;line-height:12px;letter-spacing:0.200px;">Erp.AGInvoicingPoint</div></div>
<div class="a" style="left:371px;top:237px;width:17px;height:500px;background:#F0F0F0"></div>
<div class="a" style="left:371px;top:237px;width:17px;height:25px;background:#C4C4C4"></div>
<div class="a" style="left:371px;top:720px;width:17px;height:17px;background:#C4C4C4"></div>
<svg class="a" style="left:376px;top:243px" width="8" height="5" viewBox="0 0 8 5"><path d="M0 4.500L3.500 .8 7 4.500z" fill="#000"/></svg>
<svg class="a" style="left:376px;top:727px" width="8" height="5" viewBox="0 0 8 5"><path d="M0 .5L3.500 4.200 7 .5z" fill="#000"/></svg>
<div class="a" style="left:391px;top:185px;width:5px;height:553px;background:#95B3E0"></div>
<div class="grip" style="left:399px;top:186px;height:26px"></div>
<svg class="a" style="left:412px;top:192px" width="15" height="15" viewBox="0 0 15 15" ><g fill="none"><ellipse cx="4.100" cy="3.900" rx="3.300" ry="2.700" transform="rotate(40 4.100 3.900)" fill="#c4c0ec" fill-opacity=".7" stroke="#8278cc" stroke-width="1.600"/><ellipse cx="10.500" cy="10.200" rx="3.300" ry="2.700" transform="rotate(40 10.500 10.200)" fill="#c4c0ec" fill-opacity=".7" stroke="#8278cc" stroke-width="1.600"/><path d="M4.600 4.400l5.400 5.300" stroke="#5a6cd8" stroke-width="2.200" stroke-linecap="round"/><path d="M5 4.600l4.800 4.700" stroke="#62e0f4" stroke-width="1" stroke-linecap="round"/></g></svg><div class="sep" style="left:434px;top:186px;height:26px"></div><svg class="a" style="left:443px;top:192px" width="16" height="16" viewBox="0 0 16 16" ><path d="M.7 1.500C1.500 .1 3.300 .3 4.400 1.600L8 6 14.700 .2l.8.700-6.100 7 5.900 6.300-.8.800-6.500-5.400-4.200 4.800C2.800 15.700 1.100 15.600.5 14.500c-.5-.9-.1-1.900.7-2.700L6 7.500 1.200 3.800C.4 3.100.3 2.300.7 1.500z" fill="#e40c0c"/></svg><div class="sep" style="left:466px;top:186px;height:26px"></div><svg class="a" style="left:475px;top:192px" width="15" height="15" viewBox="0 0 15 15" ><path d="M7.500 3v9M3 7.500h9" stroke="#707070" stroke-width="1"/><circle cx="7.500" cy="2.600" r="2.500" fill="#1f9a2c"/><circle cx="2.600" cy="7.500" r="2.500" fill="#dc4448"/><circle cx="12.400" cy="7.500" r="2.500" fill="#e08a1c"/><circle cx="7.500" cy="12.400" r="2.500" fill="#2c78cc"/><circle cx="7" cy="2" r="1" fill="#8ee09a"/><circle cx="2.100" cy="6.900" r="1" fill="#f6a8a8"/><circle cx="11.900" cy="6.900" r="1" fill="#f6cc8a"/><circle cx="7" cy="11.800" r="1" fill="#9ccaf4"/></svg>
<div class="t " style="left:499.62px;top:193px;font-family:'Liberation Sans',sans-serif;font-weight:normal;font-size:12px;line-height:14px;letter-spacing:0.076px;">Business Objects...</div>
<div class="sep" style="left:612px;top:186px;height:26px"></div>
<div class="t " style="left:622.35px;top:192.4px;font-family:'Liberation Sans',sans-serif;font-weight:normal;font-size:12.6px;line-height:14px;">∑</div>
<div class="sep" style="left:640px;top:186px;height:26px"></div>
<div class="t " style="left:653.15px;top:192px;font-family:'DejaVu Sans','Liberation Sans',sans-serif;font-weight:bold;font-size:11.2px;line-height:13px;letter-spacing:0.059px;">Arrange Diagram</div>
<div class="dd" style="left:766px;top:197px"></div><div class="dd" style="left:780px;top:204px"></div>
<div class="a" style="left:396px;top:212px;width:760px;height:509px;background-color:#fff;border:1px solid #646464;border-bottom:none;background-image:linear-gradient(to right,#e6e6e6 1px,transparent 1px),linear-gradient(to bottom,#e6e6e6 1px,transparent 1px);background-size:15px 15px;background-position:14px 14px"></div>
<div class="a" style="left:396px;top:721px;width:751px;height:21px;background:#F0F0F0"></div>
<div class="a" style="left:0px;top:738px;width:1147px;height:4px;background:#F0F0F0"></div>
<svg class="a" style="left:400px;top:725px" width="8" height="9" viewBox="0 0 8 9"><path d="M6.500 .8L2.200 4.500 6.500 8.200" stroke="#b2b2b2" stroke-width="1.800" fill="none"/></svg>
<div class="a" style="left:636px;top:392px;width:131px;height:56px;border:1px solid #c0f078;box-shadow:0 0 0 .5px rgba(192,240,120,.5)"></div>
<div class="a" style="left:646px;top:403px;width:121px;height:44px;background:#90EE90;box-shadow:7px 7px 2px -2px #ababab"></div>
<div class="t " style="left:664.98px;top:402px;font-family:'Liberation Serif',serif;font-weight:bold;font-size:13px;line-height:15px;letter-spacing:0.048px;">Erp.LaborDtl</div>
<div class="t " style="left:723.22px;top:417px;font-family:'Liberation Serif',serif;font-weight:bold;font-size:11px;line-height:12px;letter-spacing:0.009px;">+criteria</div>
<div class="a" style="left:826px;top:403px;width:121px;height:44px;background:#90EE90;box-shadow:7px 7px 2px -2px #ababab"></div>
<div class="t " style="left:849.08px;top:402px;font-family:'Liberation Serif',serif;font-weight:bold;font-size:13px;line-height:15px;letter-spacing:-0.088px;">Erp.SNTran</div>
<div class="t " style="left:902.72px;top:417px;font-family:'Liberation Serif',serif;font-weight:bold;font-size:11px;line-height:12px;letter-spacing:0.047px;">+criteria</div>
<svg class="a" style="left:760px;top:405px" width="70" height="30" viewBox="0 0 70 30"><path d="M7 15h23.500M53 15h13" stroke="#101078" stroke-width="2"/><path d="M41.500 4.500L52 15 41.500 25.500 31 15z" fill="#d3d3d3" stroke="#3c3c78" stroke-width="1.200"/></svg>
<div class="a" style="left:636px;top:392px;width:21px;height:21px;border-radius:50%;background:#ffff00;border:1px solid #000"></div>
<div class="t " style="left:641.76px;top:395px;font-family:'Liberation Serif',serif;font-weight:bold;font-size:13px;line-height:15px;">1</div>
<div class="a" style="left:816px;top:392px;width:21px;height:21px;border-radius:50%;background:#ffff00;border:1px solid #000"></div>
<div class="t " style="left:821.85px;top:395px;font-family:'Liberation Serif',serif;font-weight:bold;font-size:13px;line-height:15px;">2</div>
<div class="a" style="left:632px;top:388px;width:8px;height:8px;background:#808080;border:1px solid #2a2a2a"></div><div class="a" style="left:632px;top:443px;width:8px;height:8px;background:#808080;border:1px solid #2a2a2a"></div>
<div class="a" style="left:697px;top:388px;width:8px;height:8px;background:#808080;border:1px solid #2a2a2a"></div><div class="a" style="left:697px;top:443px;width:8px;height:8px;background:#808080;border:1px solid #2a2a2a"></div>
<div class="a" style="left:762px;top:388px;width:8px;height:8px;background:#808080;border:1px solid #2a2a2a"></div><div class="a" style="left:762px;top:443px;width:8px;height:8px;background:#808080;border:1px solid #2a2a2a"></div>
<div class="a" style="left:632px;top:416px;width:8px;height:8px;background:#adff2f;border:1px solid #6b8e23"></div><div class="a" style="left:762px;top:416px;width:8px;height:8px;background:#adff2f;border:1px solid #6b8e23"></div>
<div class="grip" style="left:3px;top:743px;height:26px"></div>
<svg class="a" style="left:16px;top:748px" width="13" height="17" viewBox="0 0 13 17" ><path d="M1.600 .7h5.900l4.800 4.800V15a1.300 1.300 0 0 1-1.300 1.300H2A1.300 1.300 0 0 1 .7 15V1.600a.9.900 0 0 1 .9-.9z" fill="url(#gdoc)" stroke="#1888f8" stroke-width="1.400"/><path d="M7.500 .7v3.700a1.100 1.100 0 0 0 1.100 1.100h3.700z" fill="#fff" stroke="#1888f8" stroke-width="1"/></svg><svg class="a" style="left:40px;top:749px" width="16" height="16" viewBox="0 0 16 16" ><path d="M.7 1.500C1.500 .1 3.300 .3 4.400 1.600L8 6 14.700 .2l.8.700-6.100 7 5.900 6.300-.8.800-6.500-5.400-4.200 4.800C2.800 15.700 1.100 15.600.5 14.500c-.5-.9-.1-1.900.7-2.700L6 7.500 1.200 3.800C.4 3.100.3 2.300.7 1.500z" fill="#e40c0c"/></svg><div class="sep" style="left:64px;top:743px;height:26px"></div><svg class="a" style="left:75px;top:750px" width="11" height="11" viewBox="0 0 11 11" ><path d="M5.500 .5l5 5.500H7.200V10.500H3.800V6H.5z" fill="#000"/></svg><svg class="a" style="left:101px;top:750px" width="11" height="11" viewBox="0 0 11 11" ><path d="M5.500 10.500l5-5.500H7.200V.5H3.800V5H.5z" fill="#000"/></svg><div class="sep" style="left:122px;top:743px;height:26px"></div><svg class="a" style="left:135px;top:750px" width="10" height="13" viewBox="0 0 10 13" ><path d="M2.200 1.800l5.800 4.800-5.800 4.800z" fill="#dce8f8" stroke="#8aa6d6" stroke-width=".9"/></svg><svg class="a" style="left:161px;top:750px" width="9" height="13" viewBox="0 0 9 13" ><path d="M7.200 1.700L1.200 6.500l6 4.800z" fill="#b4b4b4"/><path d="M7.200 1.700L1.200 6.500" stroke="#d0d0d0" stroke-width=".8"/></svg><div class="dd" style="left:182px;top:761px"></div><div class="grip" style="left:193px;top:743px;height:26px"></div><svg class="a" style="left:205px;top:749px" width="17" height="16" viewBox="0 0 17 16" ><text x=".6" y="7" font-family="DejaVu Sans,Liberation Sans,sans-serif" font-weight="bold" font-size="8.400" fill="#1818cc">A</text><text x=".8" y="14.200" font-family="DejaVu Sans,Liberation Sans,sans-serif" font-weight="bold" font-size="8.400" fill="#b0104a">Z</text><path d="M12 1.500v10.500M9.800 9.200l2.200 3 2.200-3" stroke="#606060" stroke-width="1.200" fill="none"/></svg><div class="dd" style="left:230px;top:761px"></div>
<div class="a" style="left:0px;top:794px;width:1147px;height:4px;background:#EDF1F7"></div>
<div class="a" style="left:189px;top:769px;width:97px;height:25px;background:#E8EEF9;border:1px solid #0c1c4c;border-bottom:none;border-radius:5px 5px 0 0"></div>
<div class="t " style="left:9.55px;top:777px;font-family:'DejaVu Sans','Liberation Sans',sans-serif;font-weight:bold;font-size:10.4px;line-height:12px;letter-spacing:0.271px;color:#15428B;">Table List</div>
<div class="t " style="left:86.65px;top:777px;font-family:'DejaVu Sans','Liberation Sans',sans-serif;font-weight:bold;font-size:10.4px;line-height:12px;letter-spacing:0.195px;color:#15428B;">Table Relations</div>
<div class="t " style="left:294.55px;top:777px;font-family:'DejaVu Sans','Liberation Sans',sans-serif;font-weight:bold;font-size:10.4px;line-height:12px;letter-spacing:0.190px;color:#15428B;">SubQuery Criteria</div>
<div class="t " style="left:420.75px;top:777px;font-family:'DejaVu Sans','Liberation Sans',sans-serif;font-weight:bold;font-size:10.4px;line-height:12px;letter-spacing:0.154px;color:#15428B;">Function Call Parameters</div>
<div class="t " style="left:592.95px;top:777px;font-family:'DejaVu Sans','Liberation Sans',sans-serif;font-weight:bold;font-size:10.4px;line-height:12px;letter-spacing:0.202px;color:#15428B;">Pivot SubQuery FOR Clause</div>
<div class="t " style="left:204.05px;top:776px;font-family:'Liberation Sans',sans-serif;font-weight:normal;font-size:11px;line-height:12px;letter-spacing:0.140px;color:#1c3c7c;">Table Criteria</div>
<div class="a" style="left:1px;top:797px;width:1152px;height:20px;background:#DEE8F5;border:1px solid #000;border-radius:5px"></div>
<div class="t " style="left:549.28px;top:801.5px;font-family:'DejaVu Sans','Liberation Sans',sans-serif;font-weight:bold;font-size:10.4px;line-height:12px;letter-spacing:0.055px;">Criteria applied on LaborDtl (Erp.LaborDtl) &nbsp;table data retrieval.</div>
<div class="a" style="left:0px;top:817px;width:1147px;height:134px;background:#fff;border-left:1px solid #adadad"></div>
<div class="a" style="left:0px;top:817px;width:1147px;height:23px;background:#C3C3C3;border-top:1px solid #6a6a6a;border-bottom:1px solid #000"></div>
<div class="t " style="left:3.05px;top:822px;font-family:'DejaVu Sans','Liberation Sans',sans-serif;font-weight:bold;font-size:10.4px;line-height:12px;letter-spacing:-0.257px;">And/Or</div>
<div class="t " style="left:92.51px;top:822px;font-family:'DejaVu Sans','Liberation Sans',sans-serif;font-weight:bold;font-size:10.4px;line-height:12px;">(</div>
<div class="a" style="left:90px;top:817px;width:2px;height:23px;background:#3a3a3a"></div>
<div class="t " style="left:176.95px;top:822px;font-family:'DejaVu Sans','Liberation Sans',sans-serif;font-weight:bold;font-size:10.4px;line-height:12px;letter-spacing:-0.013px;">Not</div>
<div class="a" style="left:174px;top:817px;width:2px;height:23px;background:#3a3a3a"></div>
<div class="t " style="left:248.05px;top:822px;font-family:'DejaVu Sans','Liberation Sans',sans-serif;font-weight:bold;font-size:10.4px;line-height:12px;letter-spacing:0.199px;">Field</div>
<div class="a" style="left:245px;top:817px;width:2px;height:23px;background:#3a3a3a"></div>
<div class="t " style="left:512.48px;top:822px;font-family:'DejaVu Sans','Liberation Sans',sans-serif;font-weight:bold;font-size:10.4px;line-height:12px;letter-spacing:-0.030px;">Operation</div>
<div class="a" style="left:509px;top:817px;width:2px;height:23px;background:#3a3a3a"></div>
<div class="t " style="left:752.45px;top:822px;font-family:'DejaVu Sans','Liberation Sans',sans-serif;font-weight:bold;font-size:10.4px;line-height:12px;letter-spacing:0.160px;">Filter Value</div>
<div class="a" style="left:749px;top:817px;width:2px;height:23px;background:#3a3a3a"></div>
<div class="a" style="left:1px;top:840px;width:19px;height:24px;background:#F0F0F0;border-bottom:1px solid #b4b4b4"></div><div class="a" style="left:20px;top:840px;width:71px;height:23px;background:#fff;border:1px solid #000;border-radius:3.500px;box-shadow:inset 0 0 0 .4px #000"></div><div class="a" style="left:90px;top:840px;width:85px;height:23px;background:#fff;border:1px solid #000;border-radius:3.500px;box-shadow:inset 0 0 0 .4px #000"></div><div class="a" style="left:174px;top:840px;width:72px;height:23px;background:#fff;border:1px solid #000;border-radius:3.500px;box-shadow:inset 0 0 0 .4px #000"></div><div class="a" style="left:245px;top:840px;width:265px;height:23px;background:#fff;border:1px solid #000;border-radius:3.500px;box-shadow:inset 0 0 0 .4px #000"></div><div class="a" style="left:509px;top:840px;width:241px;height:23px;background:#fff;border:1px solid #000;border-radius:3.500px;box-shadow:inset 0 0 0 .4px #000"></div><div class="a" style="left:749px;top:840px;width:402px;height:23px;background:#fff;border:1px solid #000;border-radius:3.500px;box-shadow:inset 0 0 0 .4px #000"></div><div class="a" style="left:205px;top:846px;width:11px;height:11px;background:#fff;border:1px solid #a8a8a8"></div>
<div class="t " style="left:250.43px;top:843px;font-family:'Liberation Sans',sans-serif;font-weight:normal;font-size:11px;line-height:12px;letter-spacing:0.087px;">JobNum</div>
<div class="t " style="left:514.96px;top:844px;font-family:'Liberation Sans',sans-serif;font-weight:normal;font-size:11px;line-height:12px;">=</div>
<div class="t " style="left:754.08px;top:846px;font-family:'DejaVu Sans','Liberation Sans',sans-serif;font-weight:bold;font-size:10.4px;line-height:12px;letter-spacing:0.444px;color:#0000f0;text-decoration:underline;">CT481-JIS-001</div>
<div class="t " style="left:845.55px;top:846px;font-family:'DejaVu Sans','Liberation Sans',sans-serif;font-weight:bold;font-size:10.4px;line-height:12px;letter-spacing:0.117px;">constant</div>
<div class="a" style="left:1px;top:864px;width:19px;height:24px;background:#F0F0F0;border-bottom:1px solid #b4b4b4"></div><div class="a" style="left:20px;top:864px;width:1127px;height:23px;background:#0078D7"></div><div class="a" style="left:8px;top:871.5px;width:0;height:0;border-top:4.500px solid transparent;border-bottom:4.500px solid transparent;border-left:5.500px solid #000"></div><div class="a" style="left:20px;top:864px;width:71px;height:23px;background:#0078D7;border:1px solid #000;border-radius:3.500px;box-shadow:inset 0 0 0 .4px #000"></div><div class="a" style="left:90px;top:864px;width:85px;height:23px;background:#0078D7;border:1px solid #000;border-radius:3.500px;box-shadow:inset 0 0 0 .4px #000"></div><div class="a" style="left:174px;top:864px;width:72px;height:23px;background:#0078D7;border:1px solid #000;border-radius:3.500px;box-shadow:inset 0 0 0 .4px #000"></div><div class="a" style="left:245px;top:864px;width:265px;height:23px;background:#0078D7;border:1px solid #000;border-radius:3.500px;box-shadow:inset 0 0 0 .4px #000"></div><div class="a" style="left:509px;top:864px;width:241px;height:23px;background:#0078D7;border:1px solid #000;border-radius:3.500px;box-shadow:inset 0 0 0 .4px #000"></div><div class="a" style="left:749px;top:864px;width:402px;height:23px;background:#0078D7;border:1px solid #000;border-radius:3.500px;box-shadow:inset 0 0 0 .4px #000"></div><div class="a" style="left:205px;top:870px;width:11px;height:11px;background:#fff;border:1px solid #a8a8a8"></div>
<div class="t " style="left:24.18px;top:867px;font-family:'Liberation Sans',sans-serif;font-weight:normal;font-size:11px;line-height:12px;letter-spacing:0.479px;color:#fff;">And</div>
<div class="t " style="left:249.70px;top:867px;font-family:'Liberation Sans',sans-serif;font-weight:normal;font-size:11px;line-height:12px;letter-spacing:0.289px;color:#fff;">EmployeeNum</div>
<div class="t " style="left:514.96px;top:867px;font-family:'Liberation Sans',sans-serif;font-weight:normal;font-size:11px;line-height:12px;color:#fff;">=</div>
<div class="t " style="left:753.98px;top:870px;font-family:'Liberation Sans',sans-serif;font-weight:normal;font-size:12px;line-height:14px;letter-spacing:-0.869px;color:#2222f4;text-decoration:underline;">740</div>
<div class="t " style="left:777.19px;top:870px;font-family:'Liberation Sans',sans-serif;font-weight:normal;font-size:12px;line-height:14px;letter-spacing:-0.009px;color:#fff;">constant</div>
<div class="a" style="left:19px;top:863px;width:1135px;height:25px;border:1px dotted #0078D7;"></div>
</body></html>
